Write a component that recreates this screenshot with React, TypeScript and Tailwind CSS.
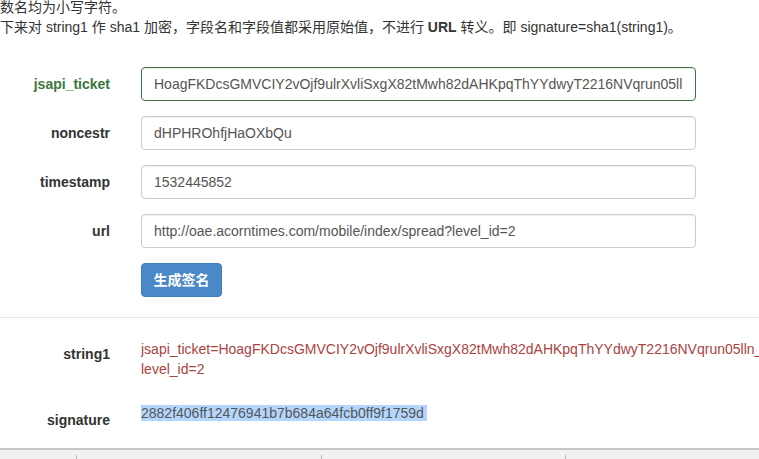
import React from "react";

const font = { fontFamily: '"Liberation Sans", "Noto Sans CJK SC", Arial, sans-serif' };

const fields = [
  { name: "jsapi_ticket", value: "HoagFKDcsGMVCIY2vOjf9ulrXvliSxgX82tMwh82dAHKpqThYYdwyT2216NVqrun05llnUa", ok: true },
  { name: "noncestr", value: "dHPHROhfjHaOXbQu" },
  { name: "timestamp", value: "1532445852" },
  { name: "url", value: "http://oae.acorntimes.com/mobile/index/spread?level_id=2" },
];

export default function App() {
  return (
    <div
      className="h-[459px] w-[759px] overflow-hidden bg-white text-[14px] leading-[20px] text-[#333]"
      style={font}
    >
      <div className="mt-[-3px] whitespace-nowrap">
        <p>数名均为小写字符。</p>
        <p>
          下来对 string1 作 sha1 加密，字段名和字段值都采用原始值，不进行 <b>URL</b> 转义。即
          signature=sha1(string1)。
        </p>
      </div>

      <div className="mt-[30px] flex flex-col gap-[15px]">
        {fields.map((f) => (
          <div key={f.name} className="flex items-center">
            <label
              className={`w-[110px] text-right font-bold ${f.ok ? "text-[#3c763d]" : "text-[#333]"}`}
            >
              {f.name}
            </label>
            <input
              readOnly
              defaultValue={f.value}
              className={`ml-[31px] h-[34px] w-[555px] rounded-[4px] border bg-white px-[12px] text-[14px] text-[#555] shadow-[inset_0_1px_1px_rgba(0,0,0,0.075)] outline-none ${
                f.ok ? "border-[#3c763d]" : "border-[#ccc]"
              }`}
              style={font}
            />
          </div>
        ))}
        <div className="flex">
          <button className="ml-[141px] h-[34px] w-[81px] rounded-[4px] border border-[#3f7cc0] bg-[#4a89c8] text-[14px] font-bold text-white">
            生成签名
          </button>
        </div>
      </div>

      <div className="mt-[20px] border-t border-[#e5e5e5]" />

      <div className="flex h-[130px] flex-col">
        <div className="mt-[21px] flex">
          <div className="w-[110px] pt-[5px] text-right font-bold">string1</div>
          <div className="ml-[31px] min-w-0 flex-1 overflow-hidden whitespace-nowrap text-[#a94442]">
            <div>
              jsapi_ticket=HoagFKDcsGMVCIY2vOjf9ulrXvliSxgX82tMwh82dAHKpqThYYdwyT2216NVqrun05lln_Ua&amp;noncestr=dHPHROhfjHaOXbQu&amp;timestamp=1532445852&amp;url=http://oae.acorntimes.com/mobile/index/spread?
            </div>
            <div>level_id=2</div>
          </div>
        </div>
        <div className="mt-[24px] flex">
          <div className="w-[110px] pt-[7px] text-right font-bold">signature</div>
          <div className="ml-[31px] text-[#555]">
            <span className="bg-[#b4d5fe] pr-[3px]">2882f406ff12476941b7b684a64fcb0ff9f1759d</span>
          </div>
        </div>
      </div>

      <div className="h-[12px] border-t-2 border-[#c6c6c6] bg-[#f1f1f1]">
        <div className="flex h-full items-end">
          <div className="h-[5px] w-[77px] border-r border-[#b8b8b8]" />
          <div className="h-[5px] w-[245px] border-r border-[#b8b8b8]" />
          <div className="h-[5px] w-[244px] border-r border-[#b8b8b8]" />
        </div>
      </div>
    </div>
  );
}
